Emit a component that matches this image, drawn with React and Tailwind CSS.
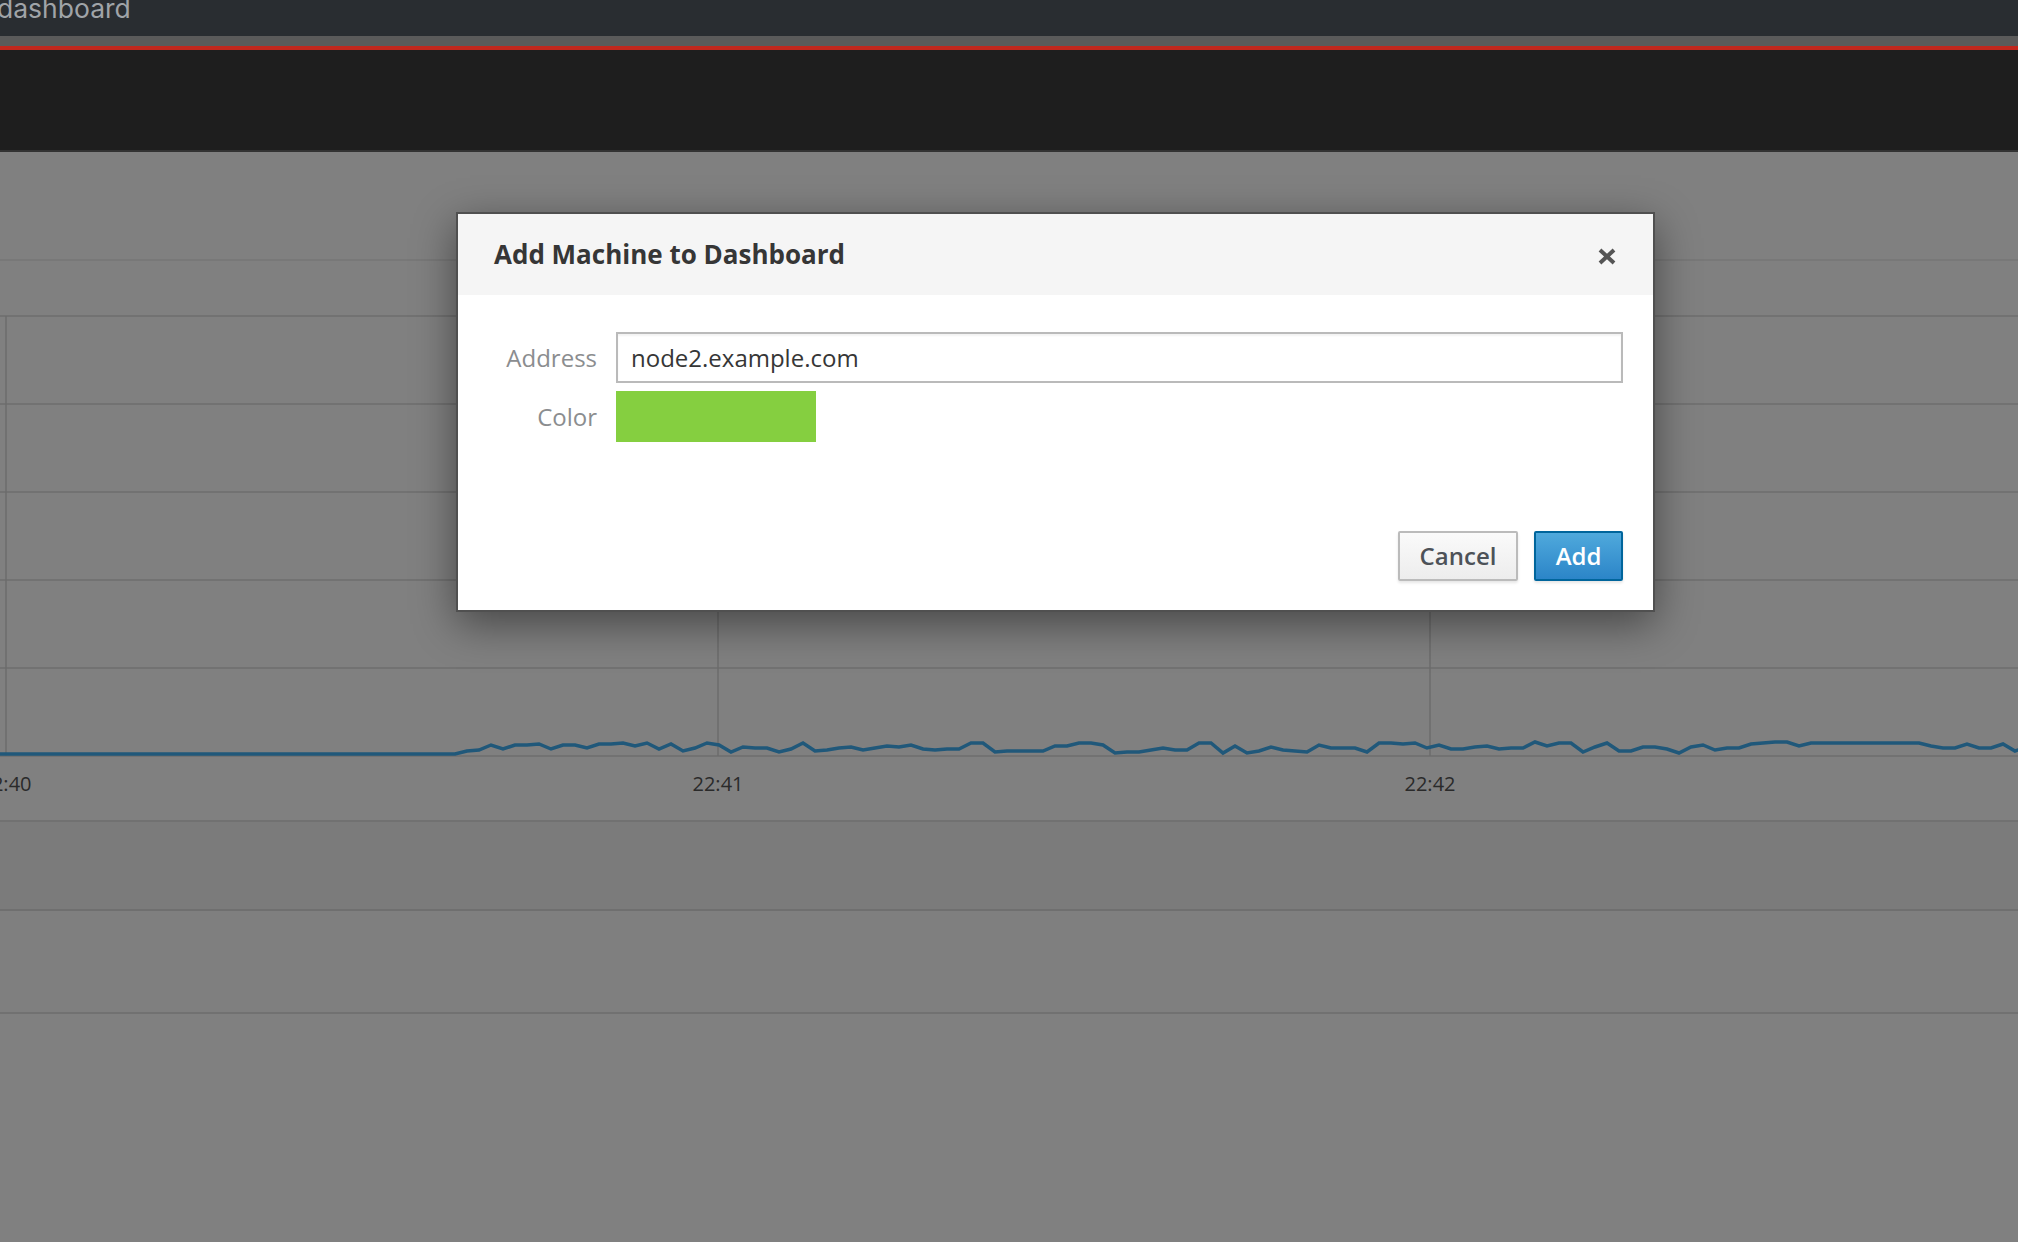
import React from 'react'

const seriesPoints = () => {
  let seed = 7
  const rand = () => {
    seed = (seed * 16807) % 2147483647
    return seed / 2147483647
  }
  const pts = [[0, 439], [455, 439]]
  let x = 455
  let last = 436
  while (x < 2030) {
    x += 12
    let v
    const r = rand()
    if (r < 0.2) v = last
    else v = 439 - (1 + rand() * 11)
    pts.push([x, Math.round(v)])
    last = v
  }
  return pts.map(p => p.join(',')).join(' ')
}

const Chart = () => {
  const rows = [1, 89, 177, 265, 353, 441]
  const cols = [6, 718, 1430]
  return (
    <svg width="2018" height="442" className="block">
      {rows.map(y => (
        <line key={y} x1="0" x2="2018" y1={y} y2={y} stroke="#727272" strokeWidth="2" />
      ))}
      {cols.map(x => (
        <line key={x} x1={x} x2={x} y1="1" y2="441" stroke="#6c6c6c" strokeWidth="1.5" />
      ))}
      <polyline points={seriesPoints()} fill="none" stroke="#20587a" strokeWidth="3.5" strokeLinejoin="miter" />
    </svg>
  )
}

const Dialog = () => {
  return (
    <div className="absolute left-[456px] top-[212px] w-[1199px] border-2 border-[#505050] bg-white shadow-[0_12px_40px_rgba(0,0,0,0.45)] font-['Open_Sans',sans-serif]">
      <div className="h-[81px] bg-[#f5f5f5] flex items-center justify-between pl-[36px] pr-[37px]">
        <h4 className="text-[26px] font-bold text-[#363636]">Add Machine to Dashboard</h4>
        <button className="w-[18px] h-[17px] mt-[3px] flex items-center justify-center">
          <svg width="18" height="17" viewBox="0 0 18 17">
            <path d="M2 2 L16 15 M16 2 L2 15" stroke="#555" strokeWidth="4" />
          </svg>
        </button>
      </div>
      <div className="pt-[37px] pr-[30px] flex flex-col gap-[8px]">
        <div className="flex items-center h-[51px]">
          <label className="w-[139px] text-right text-[24px] text-[#8b8d8f]">Address</label>
          <input
            className="ml-[19px] flex-1 h-[51px] border-2 border-[#bababa] pl-[13px] text-[24px] text-[#363636] outline-none shadow-[inset_0_2px_2px_rgba(0,0,0,0.05)]"
            defaultValue="node2.example.com"
          />
        </div>
        <div className="flex items-center h-[51px]">
          <label className="w-[139px] text-right text-[24px] text-[#8b8d8f]">Color</label>
          <div className="ml-[19px] w-[200px] h-[51px] bg-[#85cf40]"></div>
        </div>
      </div>
      <div className="pt-[89px] pb-[29px] pr-[30px] flex justify-end gap-[16px]">
        <button className="w-[120px] h-[50px] border-2 border-[#bbbbbb] rounded-[2px] bg-gradient-to-b from-[#fafafa] to-[#ededed] text-[24px] font-semibold text-[#4d5258] shadow-[0_2px_3px_rgba(0,0,0,0.1)]">
          Cancel
        </button>
        <button className="w-[89px] h-[50px] border-2 border-[#00659c] rounded-[2px] bg-gradient-to-b from-[#4fa9dc] to-[#2b85c8] text-[24px] font-semibold text-white shadow-[0_2px_3px_rgba(0,0,0,0.1)]">
          Add
        </button>
      </div>
    </div>
  )
}

export default function App() {
  return (
    <div className="w-[2018px] h-[1242px] relative overflow-hidden bg-[#808080] flex flex-col">
      <div className="h-[36px] bg-[#292d31] overflow-hidden shrink-0">
        <div className="ml-[-3px] mt-[-5px] text-[26.5px] leading-[26px] text-[#a0a4a8] font-['Inter',sans-serif]">dashboard</div>
      </div>
      <div className="h-[10px] bg-[#5a5a5a] shrink-0"></div>
      <div className="h-[4px] bg-[#c1271d] shrink-0"></div>
      <div className="h-[100px] bg-[#1e1e1e] shrink-0"></div>
      <div className="h-[2px] bg-[#333333] shrink-0"></div>

      <div className="flex flex-col flex-1 font-['Open_Sans',sans-serif]">
        <div className="h-[109px] border-b-2 border-[#787878]"></div>
        <div className="h-[54px]"></div>
        <Chart />
        <div className="h-[63px] relative text-[20px] text-[#2a2a2a]">
          <span className="absolute left-[6px] top-[12px] -translate-x-1/2">22:40</span>
          <span className="absolute left-[718px] top-[12px] -translate-x-1/2">22:41</span>
          <span className="absolute left-[1430px] top-[12px] -translate-x-1/2">22:42</span>
        </div>
        <div className="h-[89px] border-t-2 border-[#717171] bg-[#7b7b7b]"></div>
        <div className="h-[103px] border-t-2 border-[#6f6f6f] bg-[#7f7f7f]"></div>
        <div className="flex-1 border-t-2 border-[#717171]"></div>
      </div>

      <Dialog />
    </div>
  )
}
